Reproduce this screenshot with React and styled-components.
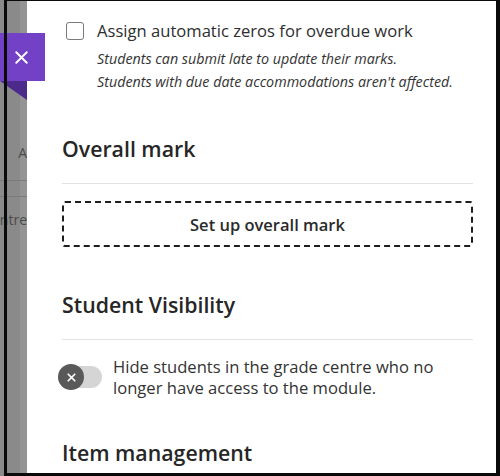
import React from 'react'
import styled, { createGlobalStyle } from 'styled-components'
import { X } from 'lucide-react'

const Global = createGlobalStyle`
  html, body { margin: 0; padding: 0; background: #fff; }
  body { font-family: "Open Sans", "Liberation Sans", sans-serif; }
`

const Screen = styled.div`
  position: relative;
  width: 500px;
  height: 476px;
  display: flex;
  overflow: hidden;
  background: #8c8c8c;
  &::after {
    content: '';
    position: absolute;
    left: 4px;
    top: 0;
    right: 0;
    bottom: 0;
    border-style: solid;
    border-color: #0a0a0a;
    border-width: 1px 4px 3px 3px;
    pointer-events: none;
    z-index: 5;
  }
`

const Backdrop = styled.div`
  width: 27px;
  flex-shrink: 0;
  background: linear-gradient(to right, #8a8a8a 0 20px, #949494 20px);
  display: flex;
  flex-direction: column;
  overflow: hidden;
`

const BackCell = styled.div`
  height: ${p => p.h}px;
  flex-shrink: 0;
  border-bottom: ${p => (p.line ? '1px solid #7a7a7a' : 'none')};
  display: flex;
  align-items: center;
  justify-content: flex-end;
  font-size: 14px;
  color: #4a4a4a;
  white-space: nowrap;
`

const Panel = styled.div`
  flex: 1;
  background: #fff;
  padding: 20px 27px 0 35px;
  color: #262626;
`

const CheckRow = styled.div`
  display: flex;
  gap: 13px;
  align-items: flex-start;
  margin-left: 4px;
`

const Box = styled.span`
  width: 18px;
  height: 18px;
  margin-top: 2px;
  flex-shrink: 0;
  box-sizing: border-box;
  border: 1.5px solid #7a7a7a;
  border-radius: 3px;
  background: #fff;
`

const Label = styled.div`
  font-size: 16.6px;
  line-height: 22px;
  color: #2e2e2e;
  white-space: nowrap;
`

const Help = styled.div`
  margin-top: 5px;
  font-size: 14.3px;
  line-height: 23px;
  font-style: italic;
  color: #333;
  white-space: nowrap;
`

const Heading = styled.h2`
  margin: ${p => p.top}px 0 0;
  padding-bottom: ${p => (p.divider ? 20 : 0)}px;
  border-bottom: ${p => (p.divider ? '1px solid #e2e2e2' : 'none')};
  font-size: 21.3px;
  line-height: 28px;
  font-weight: 600;
  color: #262626;
`

const DashedButton = styled.button`
  display: block;
  width: 100%;
  height: 46px;
  margin-top: 17px;
  border: 2px dashed #1e1e1e;
  border-radius: 3px;
  background: #fff;
  font-family: inherit;
  font-size: 16.5px;
  font-weight: 600;
  color: #2a2a2a;
`

const ToggleRow = styled.div`
  display: flex;
  align-items: center;
  gap: 11px;
  margin-top: 16px;
`

const Track = styled.span`
  position: relative;
  width: 40px;
  height: 22px;
  flex-shrink: 0;
  border-radius: 11px;
  background: #d5d5d5;
`

const Knob = styled.span`
  position: absolute;
  left: -4px;
  top: -2px;
  width: 26px;
  height: 26px;
  border-radius: 50%;
  background: #595959;
  display: flex;
  align-items: center;
  justify-content: center;
  color: #fff;
`

const ToggleText = styled.div`
  font-size: 16.6px;
  line-height: 21px;
  color: #333;
  white-space: nowrap;
`

const CloseTab = styled.div`
  position: absolute;
  left: 0;
  top: 33px;
  width: 45px;
  height: 48px;
  background: #7241c6;
  display: flex;
  align-items: center;
  justify-content: center;
  z-index: 3;
  &::after {
    content: '';
    position: absolute;
    left: 0;
    top: 48px;
    width: 0;
    height: 0;
    border-top: 19px solid #4b2a8c;
    border-left: 27px solid transparent;
  }
`

const CloseIcon = styled.span`
  display: flex;
  margin-left: -3px;
  color: #fff;
`

export default function App() {
  return (
    <>
      <Global />
      <Screen>
        <Backdrop>
          <BackCell h={125} />
          <BackCell h={55} line>A</BackCell>
          <BackCell h={15} line />
          <BackCell h={45}>ntre</BackCell>
          <BackCell h={236} />
        </Backdrop>
        <CloseTab>
          <CloseIcon>
            <X size={21} strokeWidth={2.2} />
          </CloseIcon>
        </CloseTab>
        <Panel>
          <CheckRow>
            <Box />
            <div>
              <Label>Assign automatic zeros for overdue work</Label>
              <Help>
                Students can submit late to update their marks.
                <br />
                Students with due date accommodations aren't affected.
              </Help>
            </div>
          </CheckRow>
          <Heading top={42} divider>Overall mark</Heading>
          <DashedButton>Set up overall mark</DashedButton>
          <Heading top={44} divider>Student Visibility</Heading>
          <ToggleRow>
            <Track>
              <Knob>
                <X size={13} strokeWidth={3.2} />
              </Knob>
            </Track>
            <ToggleText>
              Hide students in the grade centre who no
              <br />
              longer have access to the module.
            </ToggleText>
          </ToggleRow>
          <Heading top={41}>Item management</Heading>
        </Panel>
      </Screen>
    </>
  )
}
